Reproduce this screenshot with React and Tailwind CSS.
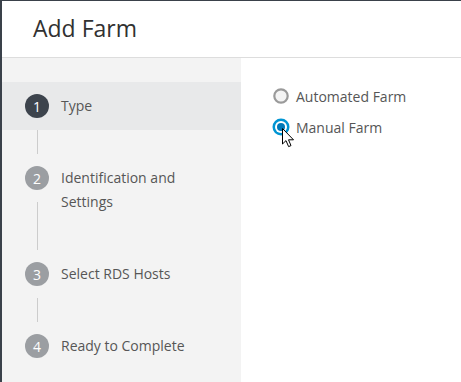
import React from "react";

const steps = [
  { n: 1, label: "Type", active: true },
  { n: 2, label: "Identification and Settings" },
  { n: 3, label: "Select RDS Hosts" },
  { n: 4, label: "Ready to Complete" },
];

function Step({ step, last }) {
  return (
    <div>
      <div className={`flex pl-[23px] ${step.active ? "bg-[#e8e9ea]" : ""}`}>
        <div className="flex flex-col items-center w-6 pt-3">
          <div
            className={`w-6 h-6 rounded-full flex items-center justify-center text-white text-[14px] ${
              step.active ? "bg-[#3d444d]" : "bg-[#9b9ea2]"
            }`}
          >
            {step.n}
          </div>
          {!last && <div className="w-px flex-1 mt-3 bg-[#cccccc]" />}
        </div>
        <div className="pl-3 py-3 pr-10 text-[14px] leading-6 text-[#565656]">
          {step.label}
        </div>
      </div>
      {!last && (
        <div className="pl-[23px] h-6 flex">
          <div className="w-6 flex justify-center">
            <div className="w-px h-full bg-[#cccccc]" />
          </div>
        </div>
      )}
    </div>
  );
}

function Radio({ checked }) {
  if (checked) {
    return (
      <svg width="18" height="18" viewBox="0 0 18 18">
        <circle cx="9" cy="9" r="8.5" fill="#0095d3" />
        <circle cx="9" cy="9" r="6" fill="#ffffff" />
        <circle cx="9" cy="9" r="4" fill="#0079b8" />
      </svg>
    );
  }
  return (
    <svg width="18" height="18" viewBox="0 0 18 18">
      <circle cx="9" cy="9" r="6.7" fill="#f4f4f4" stroke="#9a9a9a" strokeWidth="2.2" />
    </svg>
  );
}

function Cursor() {
  return (
    <svg
      className="absolute left-[10px] top-[10px]"
      width="13"
      height="20"
      viewBox="0 0 13 20"
    >
      <path
        d="M0.5 0.5 L0.5 16 L4 12.6 L6.6 18.6 L9 17.6 L6.5 11.8 L11.5 11.8 Z"
        fill="#ffffff"
        stroke="#000000"
        strokeWidth="1"
        strokeLinejoin="miter"
      />
    </svg>
  );
}

export default function App() {
  return (
    <div
      className="w-[461px] h-[382px] bg-white border-t border-l-2 border-[#3a414a] flex flex-col overflow-hidden"
      style={{ fontFamily: '"Open Sans", "Noto Sans", sans-serif' }}
    >
      <div className="h-[57px] border-b border-[#dddddd] flex items-center pl-[31px] shrink-0">
        <h1 className="text-[23px] text-[#313131] leading-none pb-[2px]">Add Farm</h1>
      </div>
      <div className="flex flex-1">
        <div className="w-[239px] bg-[#f3f3f3] pt-6">
          {steps.map((s, i) => (
            <Step key={s.n} step={s} last={i === steps.length - 1} />
          ))}
        </div>
        <div className="flex-1 pl-[31px] pt-[28px]">
          <div className="flex items-center gap-[6px] h-[20px]">
            <Radio />
            <span className="text-[14px] text-[#565656]">Automated Farm</span>
          </div>
          <div className="flex items-center gap-[6px] h-[20px] mt-[11px]">
            <div className="relative">
              <Radio checked />
              <Cursor />
            </div>
            <span className="text-[14px] text-[#565656]">Manual Farm</span>
          </div>
        </div>
      </div>
    </div>
  );
}
